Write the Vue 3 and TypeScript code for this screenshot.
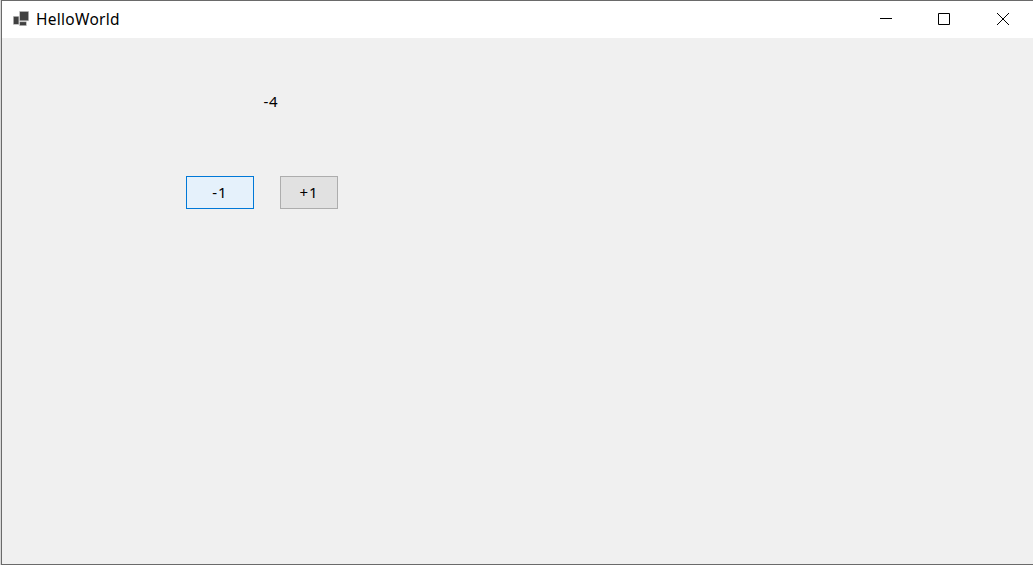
<script setup lang="ts">
import { ref } from 'vue'

const count = ref<number>(-4)
</script>

<template>
  <div class="window">
    <header class="titlebar">
      <svg class="app-icon" width="18" height="18" viewBox="0 0 18 18">
        <g fill="#404040" stroke="#c4c4c4" stroke-width="0.6">
          <rect x="1.3" y="5.3" width="5.6" height="8" />
          <rect x="7.7" y="10.8" width="6.6" height="3.9" />
          <rect x="7.7" y="0.4" width="9" height="9.4" />
        </g>
      </svg>
      <span class="title">HelloWorld</span>
      <nav class="controls">
        <span class="control">
          <svg width="14" height="14" viewBox="0 0 14 14"><path d="M1 6.5H13" /></svg>
        </span>
        <span class="control">
          <svg width="14" height="14" viewBox="0 0 14 14"><path d="M1.5 1.5H12.5V12.5H1.5Z" /></svg>
        </span>
        <span class="control">
          <svg width="14" height="14" viewBox="0 0 14 14"><path d="M1 1L13 13M13 1L1 13" /></svg>
        </span>
      </nav>
    </header>
    <main class="form">
      <div class="value">{{ count }}</div>
      <div class="buttons">
        <button class="btn minus" @click="count--">-1</button>
        <button class="btn plus" @click="count++">+1</button>
      </div>
    </main>
  </div>
</template>

<style>
body {
  margin: 0;
  background: #d8d8d8;
  overflow: hidden;
}
</style>

<style scoped>
.window {
  box-sizing: border-box;
  height: 565px;
  margin-left: 1px;
  border: 1px solid #6a6a6a;
  border-right: 0;
  background: #f0f0f0;
  color: #000;
  font: 16px/20px "Noto Sans", "Open Sans", sans-serif;
  display: flex;
  flex-direction: column;
}

.titlebar {
  height: 37px;
  background: #fff;
  display: flex;
  align-items: center;
  flex: none;
}

.app-icon {
  margin-left: 10px;
}

.title {
  margin-left: 6px;
  padding-bottom: 2px;
  font-size: 15.5px;
  letter-spacing: 0.28px;
}

.controls {
  display: flex;
  margin-left: auto;
  padding: 0 1px 2px 0;
}

.control {
  width: 58.5px;
  display: flex;
  justify-content: center;
}

.control svg {
  fill: none;
  stroke: #000;
  stroke-width: 1;
}

.form {
  padding: 53px 0 0 184px;
}

.value {
  margin-left: 77.5px;
  font-size: 15px;
  letter-spacing: 0.6px;
}

.buttons {
  display: flex;
  gap: 26px;
  margin-top: 65px;
}

.btn {
  box-sizing: border-box;
  height: 33px;
  padding: 0 0 2px;
  border: 1px solid #adadad;
  background: #e1e1e1;
  color: #000;
  font: inherit;
  font-size: 15px;
  letter-spacing: 1px;
}

.minus {
  width: 68px;
  border-color: #0078d7;
  background: #e5f1fb;
}

.plus {
  width: 58px;
}
</style>
